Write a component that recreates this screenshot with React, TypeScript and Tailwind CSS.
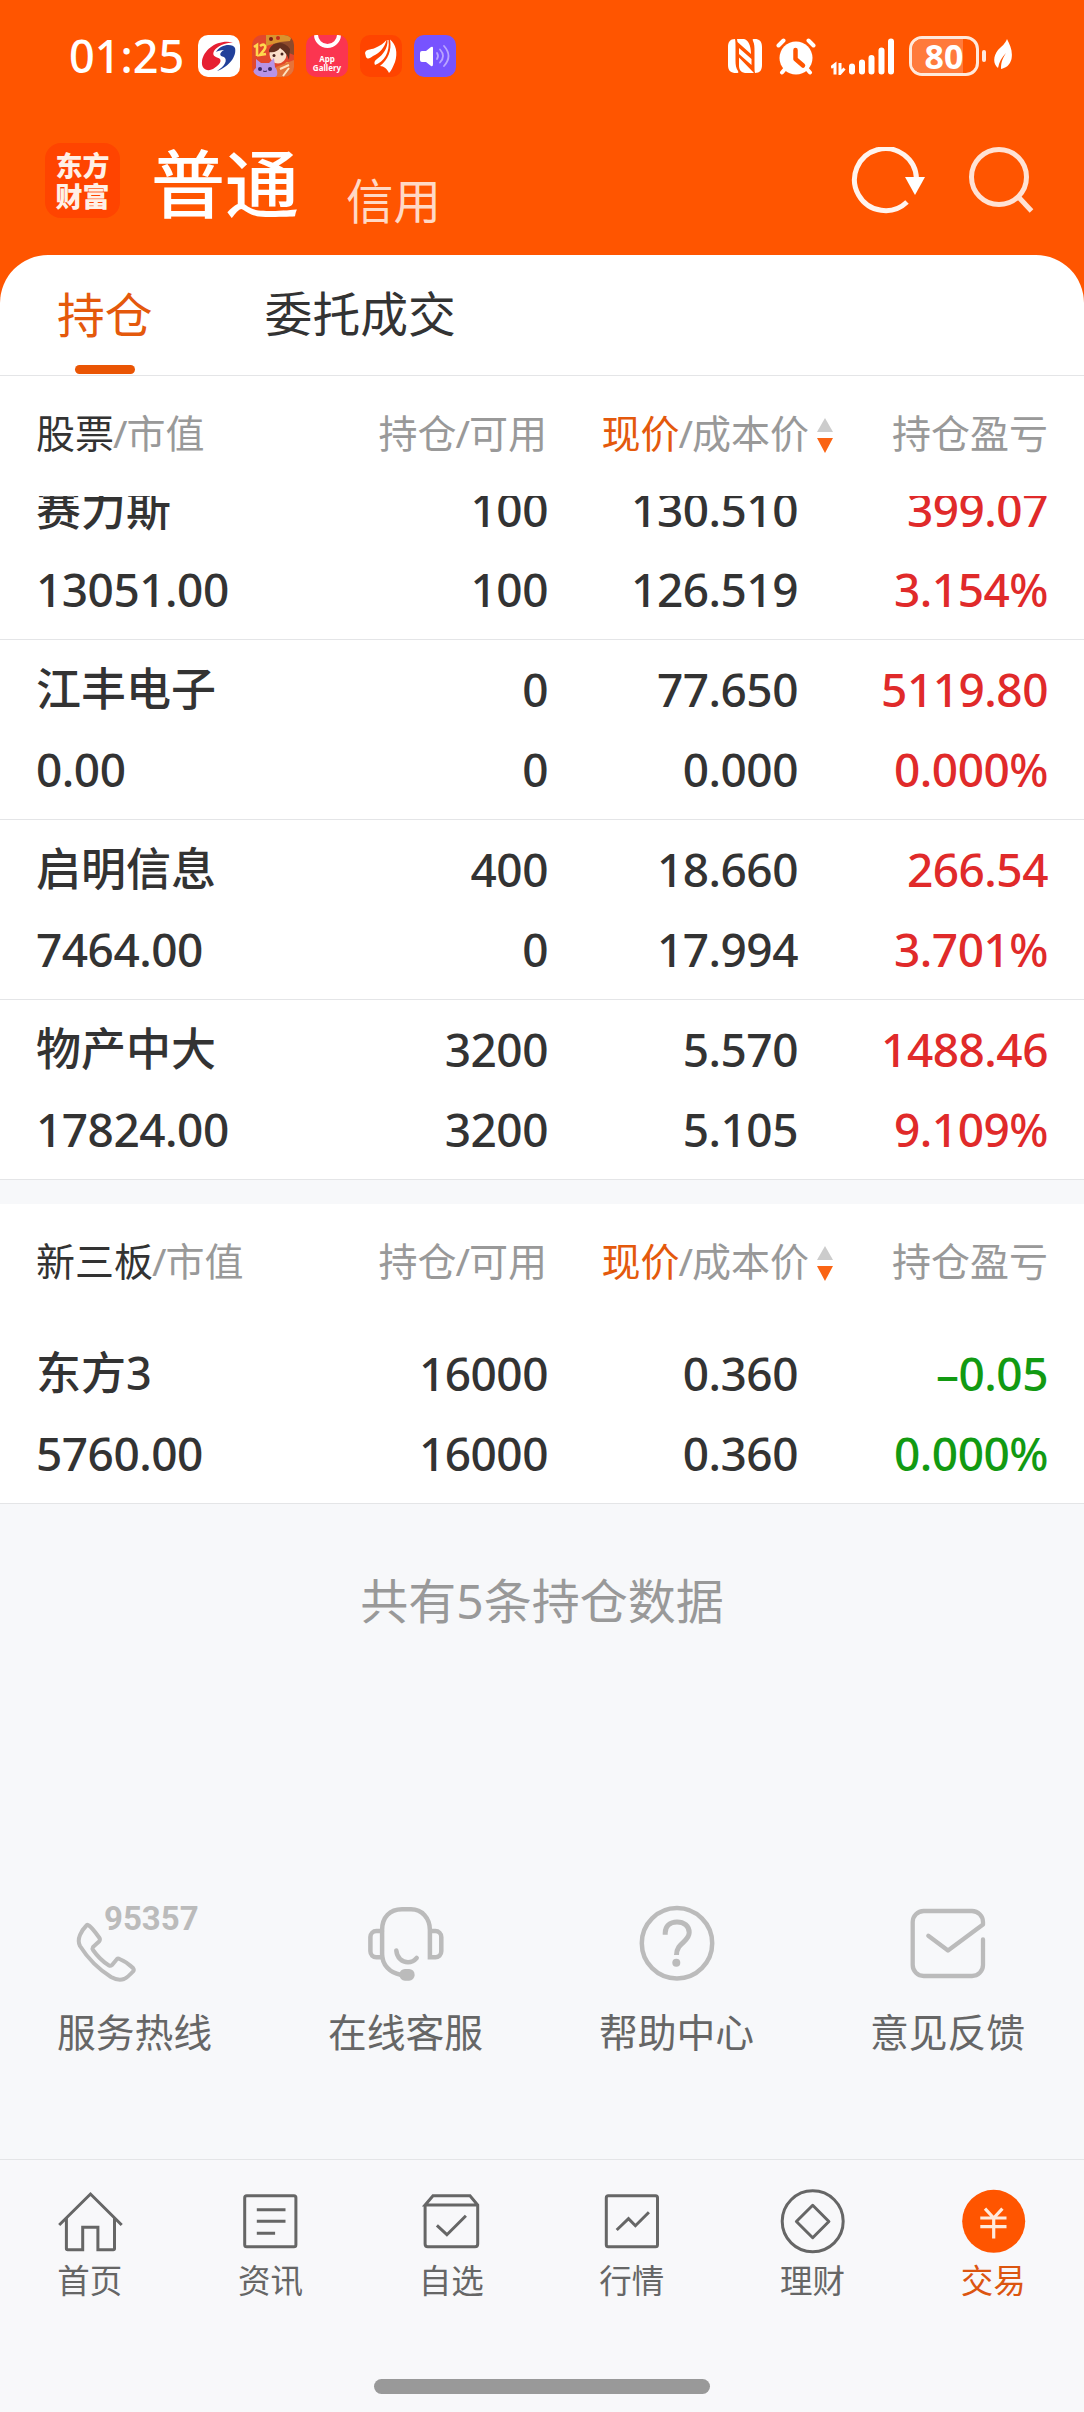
import type { ReactNode } from "react";
import clsx from "clsx";

type Holding = {
  name: string;
  value: string;
  amount: string;
  available: string;
  price: string;
  cost: string;
  profit: string;
  ratio: string;
};

const stocks: Holding[] = [
  { name: "赛力斯", value: "13051.00", amount: "100", available: "100", price: "130.510", cost: "126.519", profit: "399.07", ratio: "3.154%" },
  { name: "江丰电子", value: "0.00", amount: "0", available: "0", price: "77.650", cost: "0.000", profit: "5119.80", ratio: "0.000%" },
  { name: "启明信息", value: "7464.00", amount: "400", available: "0", price: "18.660", cost: "17.994", profit: "266.54", ratio: "3.701%" },
  { name: "物产中大", value: "17824.00", amount: "3200", available: "3200", price: "5.570", cost: "5.105", profit: "1488.46", ratio: "9.109%" },
];

const otc: Holding[] = [
  { name: "东方3", value: "5760.00", amount: "16000", available: "16000", price: "0.360", cost: "0.360", profit: "–0.05", ratio: "0.000%" },
];

function StatusBar() {
  return (
    <div className="flex h-28 items-center pl-[69px] pr-[72px] text-white">
      <span className="-mt-0.5 w-[129px] text-[45px] font-medium leading-none">01:25</span>
      <div className="flex gap-3">
        <svg width="42" height="42" viewBox="0 0 42 42">
          <rect width="42" height="42" rx="10" fill="#fff" />
          <path d="M35 7.500C20 4 6 14 4 26C3 34 9 37 15 34C20 31 24 27 22 24C20 22 13 22 16 16C19 11 27 8 35 7.500z" fill="#e61f32" />
          <path d="M18 17C22 9 35 8 37 13C39 21 31 32 19 36C27 31 30 25 26 22C21 21 21 18 26 15C22 15 20 16 18 17z" fill="#21409a" />
        </svg>
        <svg width="42" height="42" viewBox="0 0 42 42">
          <clipPath id="game">
            <rect width="42" height="42" rx="10" />
          </clipPath>
          <g clipPath="url(#game)">
            <rect width="42" height="42" fill="#e2472c" />
            <path d="M18 0h24v20L22 12z" fill="#8c4a2c" />
            <path d="M14 0h26l-2 6-10 1-14 4z" fill="#d9932f" />
            <circle cx="19" cy="4" r="2" fill="#7a1c18" />
            <circle cx="26" cy="3" r="2" fill="#c22b1d" />
            <circle cx="36" cy="30" r="3" fill="#f2c14e" />
            <ellipse cx="26" cy="19" rx="8.500" ry="9.500" fill="#fbdfca" />
            <path d="M17 15c3-8 15-10 21-1l-1 11c-2-6-5-9-9-12-2 3-6 5-11 4z" fill="#63301f" />
            <circle cx="22" cy="20.500" r="1.500" fill="#4a231c" />
            <circle cx="30" cy="19" r="1.500" fill="#4a231c" />
            <path d="M24 32l18-7v17H24z" fill="#e5733a" />
            <path d="M28 34l9-4M31 41l6-8" stroke="#fde3c0" strokeWidth="2" />
            <path d="M2 12l3-2v11M8 11c4-3 7 0 4 4l-4 5 6-1" fill="none" stroke="#ffd84d" strokeWidth="2.600" />
            <path d="M4 24l5 4h8l5-5 1 9c4 5 2 10 0 10H3c-3-3-2-7 1-9z" fill="#b793e6" />
            <circle cx="8" cy="34" r="2" fill="#3d2965" />
            <circle cx="18" cy="34" r="2" fill="#3d2965" />
            <path d="M11 36q2 1 4 0" fill="none" stroke="#3d2965" />
          </g>
        </svg>
        <div className="relative flex h-[42px] w-[42px] flex-col items-center overflow-hidden rounded-[10px] bg-[#fb3550] pt-[19px] text-center text-[8px] font-bold leading-[9px]">
          <span className="absolute -top-[17px] h-[30px] w-[27px] rounded-full border-4 border-white" />
          <span>App</span>
          <span>Gallery</span>
        </div>
        <svg width="42" height="42" viewBox="0 0 42 42">
          <rect width="42" height="42" rx="10" fill="#ff4400" />
          <g fill="#fff">
            <path d="M5 18C6 14 10 15 15 13C20 11 24 8 26.500 5C25 12 20 18 13 21C10 23 8 25 6 22z" />
            <path d="M27.500 5C28 13 23 20 17 24C14 26 14 28 15 30C24 27 30 17 28.500 5z" />
            <path d="M30 4.500C36 9 38 18 35 27C33 32 31 36 29 38C27 34 24 31 20 31C28 25 32 15 30 4.500z" />
          </g>
        </svg>
        <svg width="42" height="42" viewBox="0 0 42 42">
          <rect width="42" height="42" rx="10" fill="#7753ff" />
          <path d="M6 18q0-2 2-2h4l5-4q2-1 2 1v16q0 3-2 2l-5-4H8q-2 0-2-2z" fill="#fff" />
          <g fill="none" stroke="#b9a5ff" strokeWidth="1.800" strokeLinecap="round">
            <path d="M23 18q2 3 0 6" />
            <path d="M26 14.500q6 6.500 0 13" />
            <path d="M30 11q9 10 0 20" />
          </g>
        </svg>
      </div>
      <div className="ml-auto flex items-center">
        <svg width="34" height="34" viewBox="0 0 34 34">
          <path d="M7 0C2 0 0 3 0 8v18c0 6 3 8 8 8 2 0 3 0 2-2-2-3-2.500-6-2.500-10V7c0-3 0-5-.5-7z" fill="#fff" />
          <path d="M27 34c5 0 7-3 7-8V8c0-6-3-8-7-8-2 0-3 0-2 2 1.500 3 1.500 6 1.500 10v15c0 3 0 5 .5 7z" fill="#fff" />
          <path d="M9 0h7c4 1 7 6 7 15L9.500 3zM11 9l12.500 11v6L11 15zM11 18.500L26 34H17c-5-1-6-4-6-8z" fill="#fff" />
        </svg>
        <svg className="ml-3.5" width="40" height="37" viewBox="0 0 40 37">
          <path d="M2.500 7.500l5-5M37.500 7.500l-5-5M9 31l-3 3.500M31 31l3 3.500" stroke="#fff" strokeWidth="4" strokeLinecap="round" />
          <circle cx="20" cy="20" r="16.500" fill="#fff" />
          <path d="M19.500 12v9l7.500 6.500" fill="none" stroke="#ff5500" strokeWidth="4.500" strokeLinecap="round" strokeLinejoin="round" />
        </svg>
        <svg className="ml-[15px]" width="64" height="37" viewBox="0 0 64 37" stroke="#fff" fill="none">
          <path d="M0 29.500l4-3v10M9 25v10.500l4.500-5" strokeWidth="3" />
          <path d="M21 28.500v5M31 24.500v9M40.500 20v13.500M50.500 12.500v21M60 3.500v30" strokeWidth="6" strokeLinecap="round" />
        </svg>
        <div className="relative ml-[14px] h-10 w-[70px] rounded-[13px] border-[3px] border-[#ffe9dc]">
          <div className="h-full w-[51px] rounded-l-[10px] bg-[#ff7a3c]" />
          <span className="absolute inset-0 flex items-center justify-center text-[34px] font-bold leading-none">80</span>
        </div>
        <div className="ml-[3px] h-3 w-1 rounded-full bg-[#ffe9dc]" />
        <svg className="-mt-1 ml-2" width="18" height="31" viewBox="0 0 18 31">
          <path d="M13 0c3 6 6 12 4.500 20C16 26 12 29 7 30c0-8 2-11 5-16-4 4-7 9-8 15C-2 24 0 16 4 11c4-4 7-6 9-11z" fill="#fff" />
        </svg>
      </div>
    </div>
  );
}

function TitleBar() {
  return (
    <div className="flex h-[191px] items-start pl-[45px] pr-[50px] pt-[31px]">
      <div className="flex h-[75px] w-[75px] flex-col items-center justify-center rounded-2xl bg-[#ff4400] text-[27px] font-black leading-[31px] text-[#fff0e6]">
        <span>东方</span>
        <span>财富</span>
      </div>
      <span className="ml-[31px] mt-[5px] text-[74px] font-medium leading-[72px] text-white">普通</span>
      <span className="ml-[47px] mt-[30px] text-[47.500px] leading-[56px] text-[#ffd9c6]">信用</span>
      <svg className="ml-auto mt-1" width="76" height="68" viewBox="0 0 76 68">
        <path d="M65.500 32A31 31 0 1 0 56 55" fill="none" stroke="#fff4ee" strokeWidth="5" />
        <path d="M54 30h20L64 48z" fill="#fff" />
      </svg>
      <svg className="ml-[41px] mt-1" width="66" height="68" viewBox="0 0 66 68">
        <circle cx="31" cy="30" r="27.500" fill="none" stroke="#ffe2d4" strokeWidth="5" />
        <path d="M50.500 50l13 14" stroke="#ffe2d4" strokeWidth="5" />
      </svg>
    </div>
  );
}

function Slash() {
  return <span className="-mx-px">/</span>;
}

function ListHeader({ title }: { title: string }) {
  return (
    <div className="grid h-[120px] grid-cols-[1fr_211px_286px_215px] items-center bg-white pb-[7px] pl-9 pr-9 text-right text-[39px] leading-none text-[#999]">
      <div className="text-left">
        <span className="text-[#333]">{title}</span>
        <Slash />
        市值
      </div>
      <div>
        持仓
        <Slash />
        可用
      </div>
      <div className="flex items-center justify-end gap-2">
        <span>
          <span className="text-[#e4590c]">现价</span>
          <Slash />
          成本价
        </span>
        <svg className="mt-1.5" width="16" height="36" viewBox="0 0 16 36">
          <path d="M8 0l8 14H0z" fill="#ccc" />
          <path d="M0 20h16L8 35z" fill="#fa6414" />
        </svg>
      </div>
      <div>持仓盈亏</div>
    </div>
  );
}

function HoldingRow({ item, clipped }: { item: Holding; clipped?: boolean }) {
  const loss = item.profit.startsWith("–");
  return (
    <div
      className={clsx(
        "grid grid-cols-[1fr_209px_250px_250px] border-b border-[#e4e5e7] bg-white pb-2.5 pl-9 pr-9 text-right text-[46px] font-medium leading-[80px] tracking-[-0.5px] text-[#333]",
        clipped ? "-mt-[27px]" : "pt-[9px]",
      )}
    >
      <div className="text-left text-[45px] tracking-normal">{item.name}</div>
      <div>{item.amount}</div>
      <div>{item.price}</div>
      <div className={loss ? "text-[#129a12]" : "text-[#e02a2a]"}>{item.profit}</div>
      <div className="text-left">{item.value}</div>
      <div>{item.available}</div>
      <div>{item.cost}</div>
      <div className={loss ? "text-[#129a12]" : "text-[#e02a2a]"}>{item.ratio}</div>
    </div>
  );
}

function Service({ label, children }: { label: string; children: ReactNode }) {
  return (
    <div className="flex flex-1 flex-col items-center">
      {children}
      <span className="mt-5 text-[38.800px] leading-[56px] text-[#666]">{label}</span>
    </div>
  );
}

function Services() {
  return (
    <div className="-ml-px mr-px flex text-[#bbb]">
      <Service label="服务热线">
        <svg width="130" height="80" viewBox="0 0 130 80" fill="none" stroke="currentColor" strokeWidth="4">
          <path d="M17.800 21Q21 22 29.500 34Q30.500 36 29 37.500L23 43Q22 44.500 23 46Q30 56 39 61.500Q40.500 62.300 42 61L47 55Q48 54 49.500 55Q57 58 63 64Q64.500 66 63 67.500Q58 73 54 75Q48 77 41 73Q22 61 10 42Q7.500 37 10 31Q12 26 16 22Q17 20.500 17.800 21z" />
          <text x="34" y="26" fill="currentColor" stroke="none" className="font-[Roboto] text-[33px] font-bold">95357</text>
        </svg>
      </Service>
      <Service label="在线客服">
        <svg width="80" height="80" viewBox="0 0 80 80" fill="none" stroke="currentColor" strokeWidth="4.500" strokeLinecap="round">
          <path d="M34.500 70.700C24 69 16.100 61 16.100 50V26C16.100 13 24 5.300 36 5.300H45C56 5.300 63.900 14 63.900 26V53.300H69.300a6 6 0 0 0 6-6V33a6 6 0 0 0-6-6H64" />
          <path d="M16 27H10.400a6 6 0 0 0-6 6V47.300a6 6 0 0 0 6 6H16" />
          <path d="M30.300 46.500C31 54 36 58.300 42 58.300Q47 58.300 50.700 54" />
          <rect x="33.400" y="65" width="15.200" height="11.700" rx="5.500" fill="currentColor" stroke="none" />
        </svg>
      </Service>
      <Service label="帮助中心">
        <svg width="80" height="80" viewBox="0 0 80 80" fill="none" stroke="currentColor">
          <circle cx="40" cy="39.300" r="35.200" strokeWidth="4.500" />
          <path d="M28.200 30.700V29C28.200 22 33 17.900 40 17.900C47 17.900 52.200 22 52.200 28.500C52.200 38 39.500 38.500 39.500 51" strokeWidth="5" />
          <circle cx="39.300" cy="58.700" r="4" fill="currentColor" stroke="none" />
        </svg>
      </Service>
      <Service label="意见反馈">
        <svg width="80" height="80" viewBox="0 0 80 80" fill="none" stroke="currentColor" strokeWidth="4.300" strokeLinecap="round" strokeLinejoin="round">
          <path d="M75 35.500V61a11 11 0 0 1-11 11H15.700a11 11 0 0 1-11-11V18a11 11 0 0 1 11-11H64a11 11 0 0 1 11 11V20.500L40 46.500L20.300 31.700" />
        </svg>
      </Service>
    </div>
  );
}

const navItems = [
  {
    label: "首页",
    icon: (
      <>
        <path d="M5.200 39L36.500 8L67.700 39" />
        <path d="M12.400 32V62.500q0 1.200 1.200 1.200H28.700V41.300H43.900V63.700H59.300q1.200 0 1.200-1.200V32" />
      </>
    ),
  },
  {
    label: "资讯",
    icon: (
      <>
        <rect x="9.700" y="9.700" width="51.200" height="51" rx="2" />
        <path d="M21.800 23.700H50.500M21.800 35.300H50.500M21.800 47.300H40.100" />
      </>
    ),
  },
  {
    label: "自选",
    icon: (
      <>
        <path d="M9.100 19V58q0 2.700 2.700 2.700H59q2.700 0 2.700-2.700V19L54 9.700H17L9.100 19H61.700" />
        <path d="M20.900 39.300L30.900 48.700L49.900 29.700" />
      </>
    ),
  },
  {
    label: "行情",
    icon: (
      <>
        <rect x="10.300" y="9.700" width="51.200" height="51" rx="2" />
        <path d="M20.700 44L32.500 32.700L39.400 39.700L52.900 26.300" />
      </>
    ),
  },
  {
    label: "理财",
    icon: (
      <>
        <circle cx="35.700" cy="35.300" r="30.500" />
        <path d="M35.700 19.300L51.900 35.500L35.700 51.700L19.400 35.500z" strokeLinejoin="round" />
      </>
    ),
  },
  {
    label: "交易",
    active: true,
    icon: (
      <>
        <circle cx="35.700" cy="35.300" r="31.500" fill="#ff5500" stroke="none" />
        <path d="M27 22.700L35.700 32L44.400 22.700M35.700 32V52.500M22.300 32H48.500M22.300 40.700H48.500" stroke="#ffe9dc" strokeWidth="3.200" />
      </>
    ),
  },
];

function BottomNav() {
  return (
    <nav className="flex h-[253px] flex-col border-t border-[#e4e5e7] bg-[#f8f8fa]">
      <div className="grid grid-cols-6 pt-[26px]">
        {navItems.map((item) => (
          <div key={item.label} className={clsx("flex flex-col items-center", item.active ? "text-[#dc5510]" : "text-[#666]")}>
            <svg width="72" height="72" viewBox="0 0 72 72" fill="none" stroke="currentColor" strokeWidth="3">
              {item.icon}
            </svg>
            <span className="-ml-px text-[32.500px] leading-[45px]">{item.label}</span>
          </div>
        ))}
      </div>
      <div className="mx-auto mb-[18px] mt-auto h-[15px] w-[336px] rounded-full bg-[#999]" />
    </nav>
  );
}

export default function App() {
  return (
    <div className="flex h-[2412px] w-[1084px] flex-col overflow-hidden bg-[#f7f8fa] font-['Noto_Sans','Noto_Sans_CJK_SC',sans-serif]">
      <header className="h-[303px] bg-[#ff5500]">
        <StatusBar />
        <TitleBar />
      </header>

      <main className="-mt-12 flex flex-1 flex-col">
        <div className="flex h-[121px] rounded-t-[48px] border-b border-[#e4e5e7] bg-white pl-[57px] pt-[28px] text-[47.800px] leading-[64px]">
          <div className="flex flex-col items-center text-[#e4590c]">
            持仓
            <span className="mt-[18px] h-[9px] w-[60px] rounded-full bg-[#ea5504]" />
          </div>
          <div className="-mt-px ml-[112px] text-[#333]">委托成交</div>
        </div>

        <ListHeader title="股票" />
        <div className="overflow-hidden">
          {stocks.map((item, i) => (
            <HoldingRow key={item.name} item={item} clipped={i === 0} />
          ))}
        </div>

        <div className="mt-6">
          <ListHeader title="新三板" />
          {otc.map((item) => (
            <HoldingRow key={item.name} item={item} />
          ))}
        </div>

        <p className="mt-[65px] text-center text-[48px] leading-[64px] text-[#999]">共有5条持仓数据</p>
        <div className="mt-auto pb-[99px]">
          <Services />
        </div>
      </main>

      <BottomNav />
    </div>
  );
}
